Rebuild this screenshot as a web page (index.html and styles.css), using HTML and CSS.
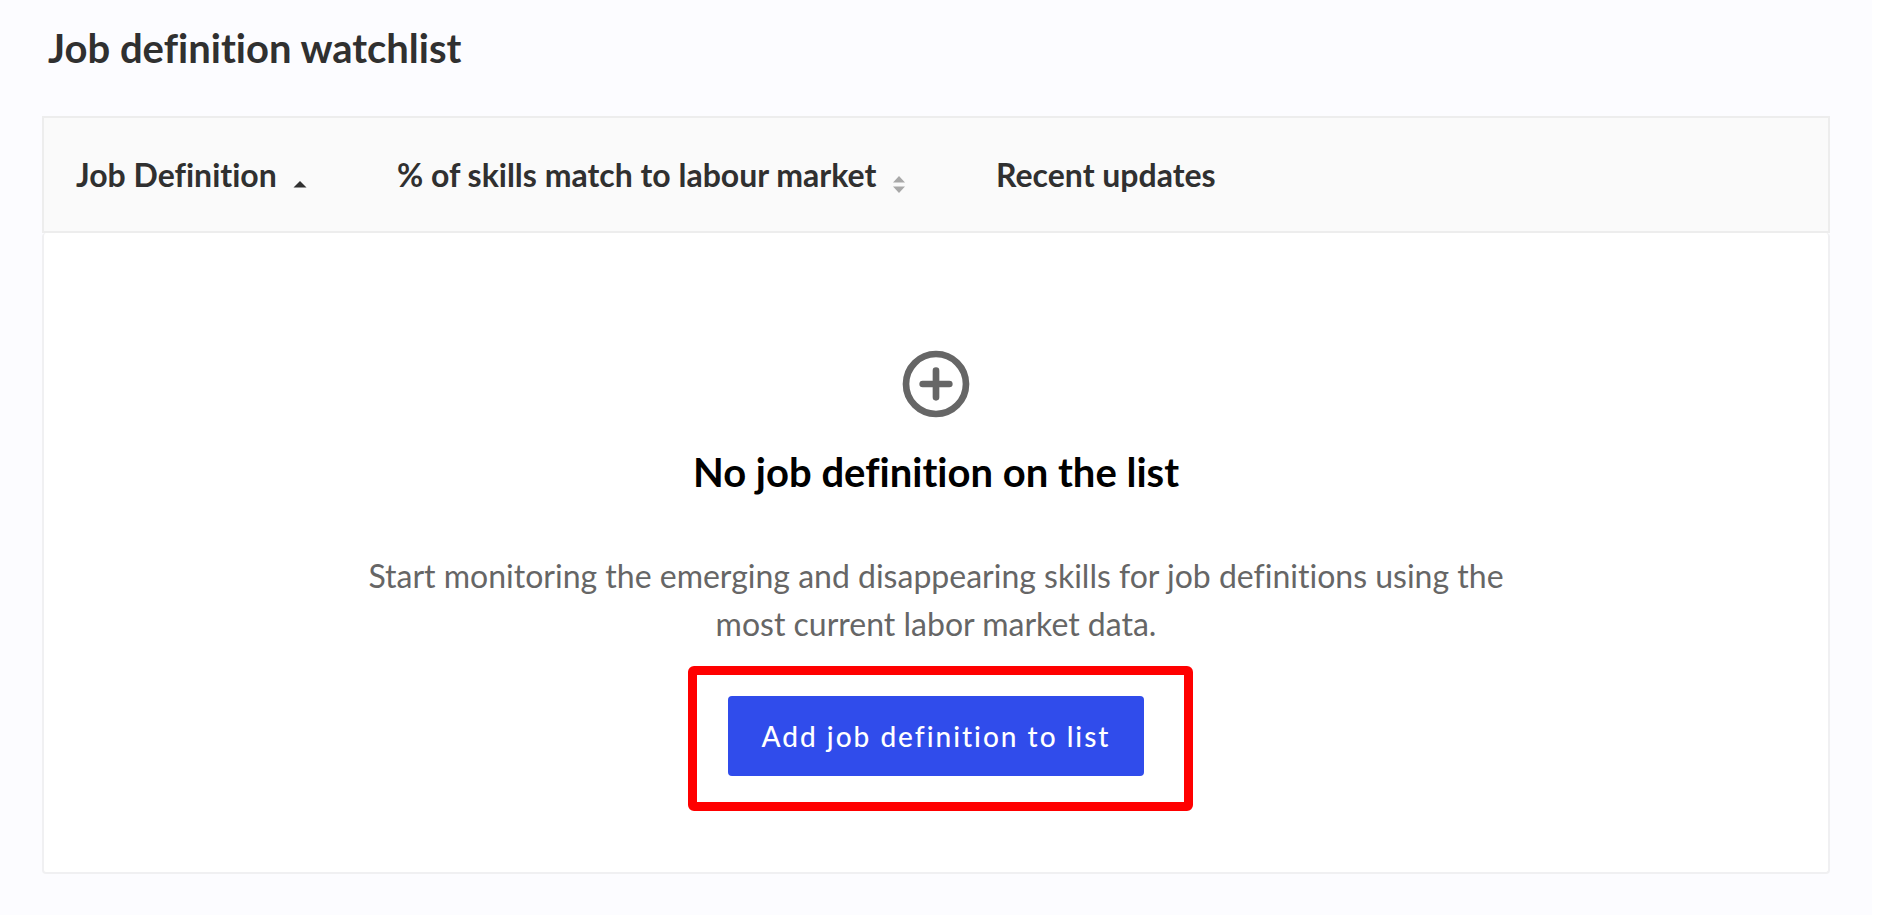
FILE: index.html
```html
<!DOCTYPE html>
<html lang="en">
<head>
<meta charset="utf-8">
<title>Job definition watchlist</title>
<link rel="stylesheet" href="styles.css">
</head>
<body>
<main class="page">
  <h1 class="page-title">Job definition watchlist</h1>
  <section class="watchlist">
    <table class="watchlist-table">
      <colgroup>
        <col class="col-name">
        <col class="col-match">
        <col>
      </colgroup>
      <thead>
        <tr>
          <th scope="col" aria-sort="ascending">
            <button class="sort" type="button">Job Definition
              <svg class="sort-icon" viewBox="0 0 14 18" aria-hidden="true"><path fill="#303030" d="M.5 12.500 7 6l6.500 6.500z"/></svg>
            </button>
          </th>
          <th scope="col">
            <button class="sort" type="button">% of skills match to labour market
              <svg class="sort-icon" viewBox="0 0 14 18" aria-hidden="true"><path fill="#a8a8a8" d="M1 7.500l6-6.500L13 7.500zM1 11.500l6 6.500L13 11.500z"/></svg>
            </button>
          </th>
          <th scope="col">Recent updates</th>
        </tr>
      </thead>
    </table>
    <div class="empty">
      <svg class="empty-icon" viewBox="0 0 24 24" fill="none" stroke="currentColor" stroke-width="2" stroke-linecap="round" aria-hidden="true">
        <circle cx="12" cy="12" r="9"/>
        <path d="M12 8v8M8 12h8"/>
      </svg>
      <h2 class="empty-title">No job definition on the list</h2>
      <p class="empty-text">Start monitoring the emerging and disappearing skills for job definitions using the most current labor market data.</p>
      <div class="highlight">
        <button class="add-button" type="button">Add job definition to list</button>
      </div>
    </div>
  </section>
</main>
</body>
</html>
```
FILE: styles.css
```css
* {
  box-sizing: border-box;
}

body {
  margin: 0;
  background: #fff;
  color: #303030;
  font-family: Lato, "Liberation Sans", sans-serif;
  font-variant-ligatures: none;
}

.page {
  min-height: 100vh;
  margin-right: 30px;
  padding: 24px 42px;
  background: #fcfcff;
}

.page-title {
  margin: 0 0 44px;
  padding-left: 6px;
  font-size: 40px;
  line-height: 48px;
}

.watchlist-table {
  width: 100%;
  table-layout: fixed;
  border: 2px solid #ededed;
  border-spacing: 0;
  background: #fafafa;
}

.col-name {
  width: 321px;
}

.col-match {
  width: 599px;
}

.watchlist-table th {
  padding: 33px 0 32px 32px;
  font-size: 32px;
  line-height: 48px;
  text-align: left;
  white-space: nowrap;
}

.sort {
  display: flex;
  align-items: center;
  gap: 16px;
  padding: 0;
  border: 0;
  background: none;
  color: inherit;
  font: inherit;
  font-variant-ligatures: none;
  cursor: pointer;
}

.sort-icon {
  width: 14px;
  height: 18px;
  margin-top: 18px;
}

.empty {
  display: flex;
  flex-direction: column;
  align-items: center;
  padding: 111px 32px 96px;
  border: 2px solid #f0f0f2;
  border-top: 0;
  border-radius: 4px;
  background: #fff;
  text-align: center;
}

.empty-icon {
  width: 80px;
  height: 80px;
  color: #666;
}

.empty-title {
  margin: 18px 0 50px;
  color: #000;
  font-size: 40px;
  line-height: 60px;
}

.empty-text {
  max-width: 1200px;
  margin: 0 0 48px;
  color: #666;
  font-size: 32px;
  line-height: 48px;
}

.highlight {
  position: relative;
}

.highlight::after {
  content: "";
  position: absolute;
  inset: -30px -49px -35px -40px;
  border: 9px solid #f00;
  border-radius: 6px;
  pointer-events: none;
}

.add-button {
  display: block;
  padding: 16px 34px;
  border: 0;
  border-radius: 4px;
  background: #304ceb;
  color: #fff;
  font-family: inherit;
  font-size: 28px;
  font-weight: 500;
  line-height: 48px;
  letter-spacing: 2px;
  cursor: pointer;
}
```
